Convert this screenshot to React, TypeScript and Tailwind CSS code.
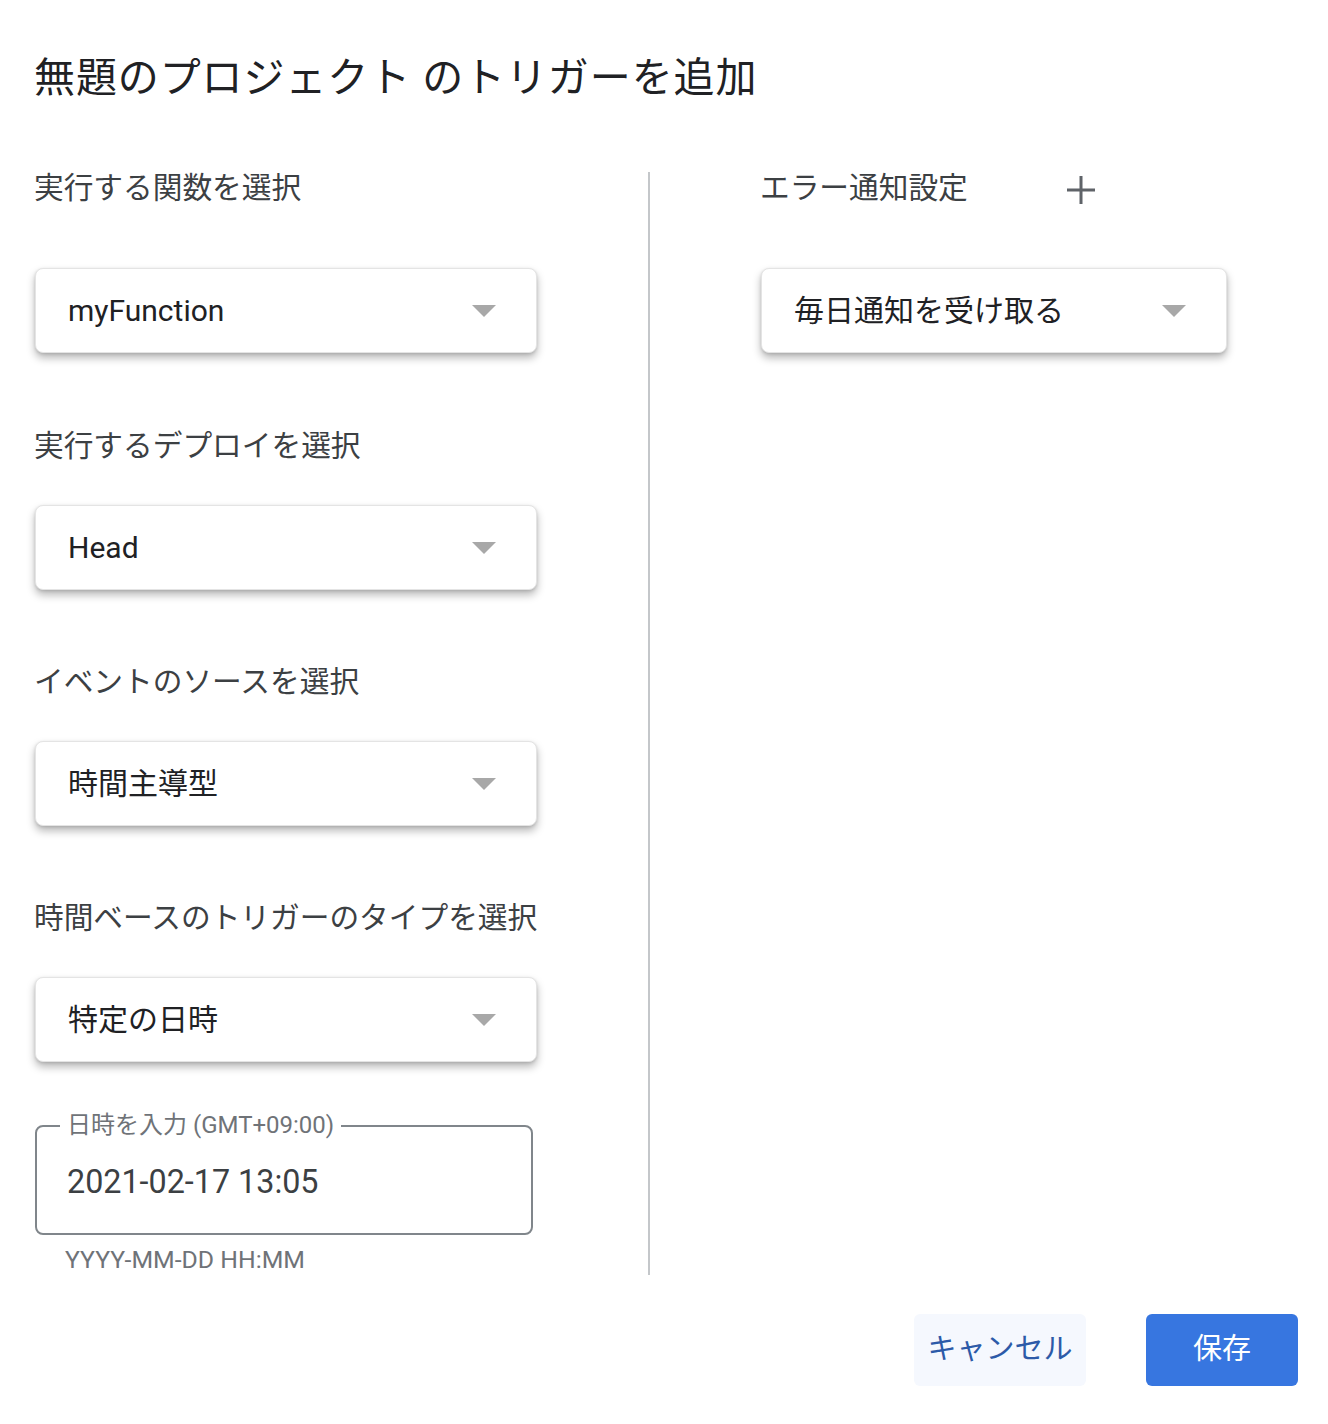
import React from "react";

const font = { fontFamily: 'Roboto, "Noto Sans CJK JP", sans-serif' };

function Caret() {
  return (
    <svg width="24" height="12" viewBox="0 0 24 12" className="shrink-0">
      <path d="M0 0 L24 0 L12 12 Z" fill="#a8a8a8" />
    </svg>
  );
}

function Select({ value, width }: { value: string; width: string }) {
  return (
    <div
      className={`${width} h-[85px] rounded-[8px] bg-white border border-[#e4e4e4] flex items-center justify-between pl-[32px] pr-[40px] shadow-[0_5px_9px_rgba(0,0,0,0.28),0_1px_3px_rgba(0,0,0,0.12)]`}
    >
      <span className="text-[30px] leading-none text-[#202124]">{value}</span>
      <Caret />
    </div>
  );
}

function Label({ children }: { children: React.ReactNode }) {
  return <div className="text-[29.7px] leading-[36px] text-[#3c4043] whitespace-nowrap">{children}</div>;
}

export default function App() {
  return (
    <div className="w-[1328px] h-[1424px] bg-white" style={font}>
      <div className="pt-[54px] pl-[34px]">
        <h1 className="text-[41px] leading-[48px] tracking-[0.9px] text-[#202124] font-normal whitespace-nowrap">
          無題のプロジェクト のトリガーを追加
        </h1>
      </div>
      <div className="flex pl-[34px] mt-[68px]">
        <div className="w-[614px] flex flex-col">
          <Label>実行する関数を選択</Label>
          <div className="mt-[62px] pl-[1px]">
            <Select value="myFunction" width="w-[502px]" />
          </div>
          <div className="mt-[75px]">
            <Label>実行するデプロイを選択</Label>
          </div>
          <div className="mt-[41px] pl-[1px]">
            <Select value="Head" width="w-[502px]" />
          </div>
          <div className="mt-[74px]">
            <Label>イベントのソースを選択</Label>
          </div>
          <div className="mt-[41px] pl-[1px]">
            <Select value="時間主導型" width="w-[502px]" />
          </div>
          <div className="mt-[74px]">
            <Label>時間ベースのトリガーのタイプを選択</Label>
          </div>
          <div className="mt-[41px] pl-[1px]">
            <Select value="特定の日時" width="w-[502px]" />
          </div>
          <div className="relative mt-[63px] ml-[1px] w-[498px] h-[110px] rounded-[8px] border-2 border-[#80868b] flex items-center pl-[30px]">
            <span className="absolute -top-[18px] left-[23px] bg-white px-[7px] text-[24px] leading-[32px] text-[#6f7378] whitespace-nowrap">
              日時を入力 (GMT+09:00)
            </span>
            <span className="text-[32.3px] leading-none text-[#3c4043] mt-[4px]">2021-02-17 13:05</span>
          </div>
          <div className="pl-[31px] mt-[10px] text-[24.8px] leading-[30px] text-[#6f7378] whitespace-nowrap">
            YYYY-MM-DD HH:MM
          </div>
        </div>
        <div className="w-[2px] bg-[#c4c7ca] mt-[2px]" />
        <div className="ml-[110px] flex flex-col">
          <div className="flex items-center">
            <Label>エラー通知設定</Label>
            <svg width="28" height="28" viewBox="0 0 28 28" className="ml-[99px] mt-[4px]">
              <rect x="12.5" y="0" width="3" height="28" fill="#5f6368" />
              <rect x="0" y="12.5" width="28" height="3" fill="#5f6368" />
            </svg>
          </div>
          <div className="mt-[62px] pl-[1px]">
            <Select value="毎日通知を受け取る" width="w-[466px]" />
          </div>
        </div>
      </div>
      <div className="flex justify-end pr-[30px] mt-[39px] gap-[60px]">
        <button className="w-[172px] h-[72px] rounded-[6px] bg-[#f5f8fe] text-[29px] text-[#2c5aa8]">キャンセル</button>
        <button className="w-[152px] h-[72px] rounded-[6px] bg-[#3776e0] text-[29px] text-white">保存</button>
      </div>
    </div>
  );
}
